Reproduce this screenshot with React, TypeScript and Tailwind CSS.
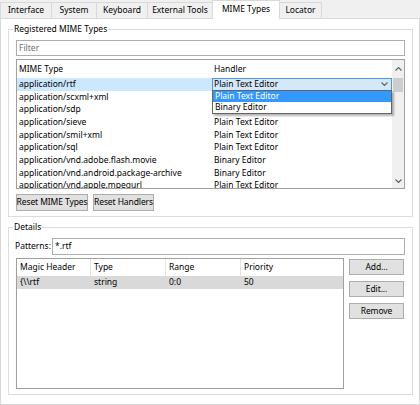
import React from "react";

const rows: [string, string][] = [
  ["application/rtf", "Plain Text Editor"],
  ["application/scxml+xml", ""],
  ["application/sdp", ""],
  ["application/sieve", "Plain Text Editor"],
  ["application/smil+xml", "Plain Text Editor"],
  ["application/sql", "Plain Text Editor"],
  ["application/vnd.adobe.flash.movie", "Binary Editor"],
  ["application/vnd.android.package-archive", "Binary Editor"],
  ["application/vnd.apple.mpegurl", "Plain Text Editor"],
];

function Chevron({ up, color = "#606060" }: { up?: boolean; color?: string }) {
  return (
    <svg width="7" height="4" viewBox="0 0 7 4">
      <polyline
        points={up ? "0.5,3.5 3.5,0.5 6.5,3.5" : "0.5,0.5 3.5,3.5 6.5,0.5"}
        fill="none"
        stroke={color}
        strokeWidth="1.1"
      />
    </svg>
  );
}

function Tab({ label, w, selected }: { label: string; w: string; selected?: boolean }) {
  if (selected) {
    return (
      <div className={`${w} h-[19px] relative z-10 bg-white border-l border-r border-t border-[#d9d9d9] flex items-center justify-center pb-[2px] whitespace-nowrap`}>
        {label}
      </div>
    );
  }
  return (
    <div className={`${w} mt-[2px] h-[16px] bg-[#f0f0f0] border-t border-l border-[#d9d9d9] flex items-center justify-center whitespace-nowrap`}>
      {label}
    </div>
  );
}

function Group({ title, children }: { title: string; children: React.ReactNode }) {
  return (
    <div className="relative border border-[#dcdcdc] px-[7px] pt-[10px] pb-[5px]">
      <span className="absolute left-[4px] top-[-7px] bg-white px-[1px] leading-[12px] whitespace-nowrap">{title}</span>
      {children}
    </div>
  );
}

function Button({ label, w, h = "h-[17px]" }: { label: string; w: string; h?: string }) {
  return (
    <div className={`${w} ${h} bg-[#e1e1e1] border border-[#adadad] flex items-center justify-center leading-none whitespace-nowrap tracking-[-0.1px]`}>
      {label}
    </div>
  );
}

export default function App() {
  return (
    <div className="w-[420px] h-[405px] bg-[#f0f0f0] text-black text-[8.5px] font-['Noto_Sans',sans-serif] overflow-hidden">
      <div className="flex items-start h-[18px]">
        <Tab label="Interface" w="w-[51px]" />
        <Tab label="System" w="w-[45px]" />
        <Tab label="Keyboard" w="w-[51px]" />
        <Tab label="External Tools" w="w-[65px]" />
        <Tab label="MIME Types" w="w-[68px]" selected />
        <div className="w-[42px] mt-[2px] h-[16px] bg-[#f0f0f0] border-t border-r border-[#d9d9d9] flex items-center justify-center">
          Locator
        </div>
      </div>
      <div className="w-[420px] h-[387px] border border-[#d9d9d9] bg-white pl-[7px] pr-[6px] pt-[10px]">
        <Group title="Registered MIME Types">
          <div className="h-[16px] border border-[#abadb3] flex items-center pl-[2px] text-[#6d6d6d]">Filter</div>
          <div className="mt-[3px] h-[130px] border border-[#a0a0a0] flex relative">
            <div className="flex-1 flex flex-col overflow-hidden">
              <div className="h-[18px] flex items-center shrink-0">
                <div className="w-[195px] pl-[2px]">MIME Type</div>
                <div className="flex-1 pl-[2px]">Handler</div>
              </div>
              {rows.map(([m, h], i) => (
                <div key={m} className="h-[12.7px] flex shrink-0 whitespace-nowrap">
                  <div className={`w-[195px] pl-[2px] flex items-center ${i === 0 ? "bg-[#cce8ff]" : ""}`}>{m}</div>
                  {i === 0 ? (
                    <div className="flex-1 border border-[#4d97df] bg-[#d5e8f8] flex items-center justify-between pl-[1px] pr-[3px]">
                      <span>{h}</span>
                      <Chevron />
                    </div>
                  ) : (
                    <div className="flex-1 pl-[2px] flex items-center">{h}</div>
                  )}
                </div>
              ))}
            </div>
            <div className="w-[12px] bg-[#f0f0f0] flex flex-col items-center">
              <div className="h-[18px] flex items-center justify-center">
                <Chevron up />
              </div>
              <div className="w-[10px] h-[14px] bg-[#cdcdcd]" />
              <div className="flex-1" />
              <div className="h-[14px] flex items-center justify-center">
                <Chevron />
              </div>
            </div>
            <div className="absolute left-[195px] top-[30px] w-[180px] border border-[#646464] bg-white shadow-[2px_2px_2px_rgba(0,0,0,0.3)]">
              <div className="h-[11px] bg-[#3399ff] text-white flex items-center pl-[2px]">Plain Text Editor</div>
              <div className="h-[11px] flex items-center pl-[2px]">Binary Editor</div>
            </div>
          </div>
          <div className="mt-[5px] flex gap-[5px]">
            <Button label="Reset MIME Types" w="w-[72px]" />
            <Button label="Reset Handlers" w="w-[61px]" />
          </div>
        </Group>
        <div className="h-[10px]" />
        <Group title="Details">
          <div className="flex items-center h-[17px]">
            <div className="w-[37px] ml-[-1px]">Patterns:</div>
            <div className="flex-1 h-[17px] border border-[#abadb3] flex items-center pl-[2px]">*.rtf</div>
          </div>
          <div className="mt-[3px] flex gap-[5px]">
            <div className="w-[328px] h-[131px] border border-[#a0a0a0] flex flex-col">
              <div className="h-[17px] flex shrink-0">
                <div className="w-[74px] border-r border-[#e5e5e5] pl-[3px] flex items-center">Magic Header</div>
                <div className="w-[75px] border-r border-[#e5e5e5] pl-[3px] flex items-center">Type</div>
                <div className="w-[75px] border-r border-[#e5e5e5] pl-[3px] flex items-center">Range</div>
                <div className="flex-1 pl-[3px] flex items-center">Priority</div>
              </div>
              <div className="h-[13px] flex bg-[#d9d9d9] shrink-0">
                <div className="w-[74px] pl-[3px] flex items-center">{"{\\\\rtf"}</div>
                <div className="w-[75px] pl-[3px] flex items-center">string</div>
                <div className="w-[75px] pl-[3px] flex items-center">0:0</div>
                <div className="flex-1 pl-[3px] flex items-center">50</div>
              </div>
            </div>
            <div className="w-[55px] flex flex-col gap-[6px] pt-[1px]">
              <Button label="Add..." w="w-[55px]" h="h-[16px]" />
              <Button label="Edit..." w="w-[55px]" h="h-[16px]" />
              <Button label="Remove" w="w-[55px]" h="h-[16px]" />
            </div>
          </div>
        </Group>
      </div>
    </div>
  );
}
